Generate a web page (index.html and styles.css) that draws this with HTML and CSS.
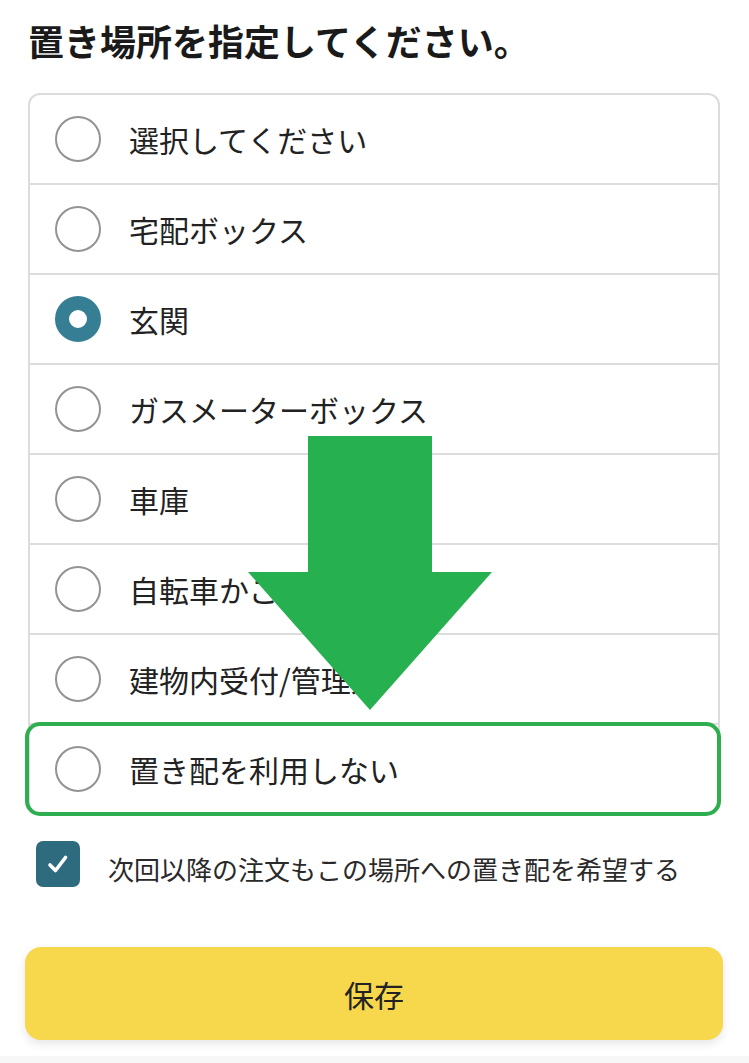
FILE: index.html
```html
<!DOCTYPE html>
<html lang="ja">
<head>
    <meta charset="UTF-8">
    <meta name="viewport" content="width=device-width, initial-scale=1.0">
    <title>置き場所の指定</title>
    <link rel="stylesheet" href="styles.css">
</head>
<body>
    <div class="page">
        <h1 class="title">置き場所を指定してください。</h1>

        <div class="place-list">
            <label class="place-row"><span class="radio"></span><span class="place-name">選択してください</span></label>
            <label class="place-row"><span class="radio"></span><span class="place-name">宅配ボックス</span></label>
            <label class="place-row"><span class="radio checked"></span><span class="place-name">玄関</span></label>
            <label class="place-row"><span class="radio"></span><span class="place-name">ガスメーターボックス</span></label>
            <label class="place-row"><span class="radio"></span><span class="place-name">車庫</span></label>
            <label class="place-row"><span class="radio"></span><span class="place-name">自転車かご</span></label>
            <label class="place-row"><span class="radio"></span><span class="place-name">建物内受付/管理人</span></label>
            <label class="place-row highlight"><span class="radio"></span><span class="place-name">置き配を利用しない</span></label>

            <!-- 注目用の矢印 -->
            <svg class="arrow" width="244" height="274" viewBox="0 0 244 274">
                <polygon points="60,0 184,0 184,136 244,136 122,274 0,136 60,136" fill="#27b04f"/>
            </svg>
        </div>

        <label class="remember">
            <span class="checkbox">
                <svg width="26" height="26" viewBox="0 0 26 26">
                    <path d="M5 14 L10.5 19.5 L20.5 6.5" fill="none" stroke="#fff" stroke-width="3.6" stroke-linecap="round" stroke-linejoin="round"/>
                </svg>
            </span>
            <span class="remember-text">次回以降の注文もこの場所への置き配を希望する</span>
        </label>

        <button class="save-btn">保存</button>
    </div>
    <div class="bottom-bar"></div>
</body>
</html>
```

FILE: styles.css
```css
body {
    margin: 0;
    background: #fff;
    font-family: 'Noto Sans CJK JP', 'Noto Sans', sans-serif;
    color: #222;
}

.page {
    padding: 0 29px 16px 28px;
}

.title {
    margin: 0;
    padding-top: 16px;
    height: 77px;
    font-size: 36px;
    line-height: 48px;
    font-weight: bold;
    color: #1a1a1a;
}

.place-list {
    position: relative;
    border: 2px solid #dcdcdc;
    border-radius: 12px;
}

.place-row {
    display: flex;
    align-items: center;
    height: 88px;
    padding-left: 25px;
    border-bottom: 2px solid #dcdcdc;
    position: relative;
}

.place-row:last-of-type {
    border-bottom: none;
}

.place-row.highlight::after {
    content: '';
    position: absolute;
    top: -3px;
    left: -5px;
    right: -3px;
    bottom: -3px;
    border: 4px solid #2fae50;
    border-radius: 15px;
}

.radio {
    width: 42px;
    height: 42px;
    border: 2px solid #939393;
    border-radius: 50%;
    flex-shrink: 0;
    box-sizing: content-box;
}

.radio.checked {
    width: 18px;
    height: 18px;
    border: 14px solid #367e93;
}

.place-name {
    margin-left: 28px;
    font-size: 30px;
    color: #222;
}

.arrow {
    position: absolute;
    left: 218px;
    top: 341px;
}

.remember {
    display: flex;
    align-items: center;
    margin-top: 26px;
    padding-left: 8px;
}

.checkbox {
    width: 44px;
    height: 46px;
    border-radius: 7px;
    background: #2f6b7e;
    display: flex;
    align-items: center;
    justify-content: center;
    flex-shrink: 0;
}

.remember-text {
    margin-left: 28px;
    margin-top: 8px;
    font-size: 26px;
    color: #2a2a2a;
}

.save-btn {
    display: block;
    width: calc(100% + 6px);
    margin: 60px -3px 0;
    height: 93px;
    border: none;
    border-radius: 16px;
    background: #f7d84c;
    box-shadow: 0 4px 10px rgba(0, 0, 0, 0.1);
    font-family: inherit;
    font-size: 30px;
    color: #222;
}

.bottom-bar {
    height: 20px;
    background: #f7f7f7;
}
```
